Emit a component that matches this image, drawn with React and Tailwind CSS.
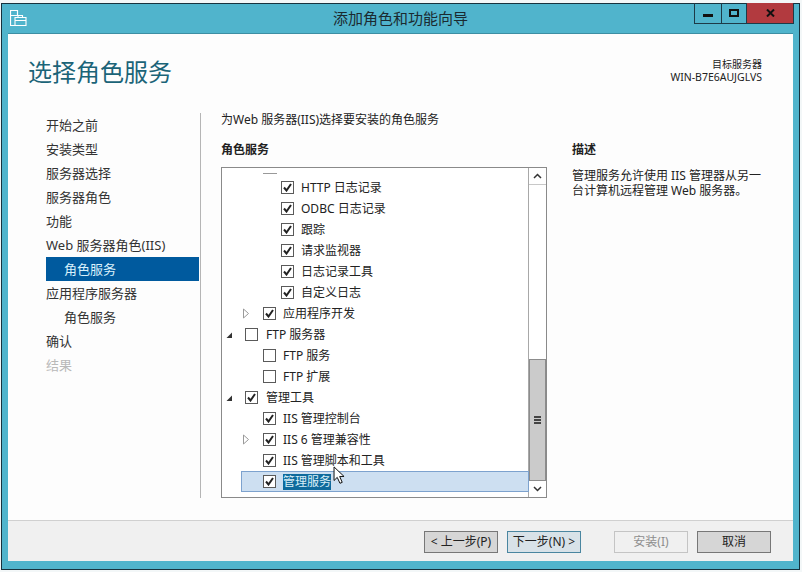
const font = { fontFamily: '"Noto Sans","Noto Sans CJK SC",sans-serif' };

const steps = [
  { t: "开始之前" },
  { t: "安装类型" },
  { t: "服务器选择" },
  { t: "服务器角色" },
  { t: "功能" },
  { t: "Web 服务器角色(IIS)" },
  { t: "角色服务", sub: true, active: true },
  { t: "应用程序服务器" },
  { t: "角色服务", sub: true },
  { t: "确认" },
  { t: "结果", off: true },
];

const rows = [
  { t: "HTTP 日志记录", l: 2, c: true },
  { t: "ODBC 日志记录", l: 2, c: true },
  { t: "跟踪", l: 2, c: true },
  { t: "请求监视器", l: 2, c: true },
  { t: "日志记录工具", l: 2, c: true },
  { t: "自定义日志", l: 2, c: true },
  { t: "应用程序开发", l: 1, c: true, a: "closed" },
  { t: "FTP 服务器", l: 0, c: false, a: "open" },
  { t: "FTP 服务", l: 1, c: false },
  { t: "FTP 扩展", l: 1, c: false },
  { t: "管理工具", l: 0, c: true, a: "open" },
  { t: "IIS 管理控制台", l: 1, c: true },
  { t: "IIS 6 管理兼容性", l: 1, c: true, a: "closed" },
  { t: "IIS 管理脚本和工具", l: 1, c: true },
  { t: "管理服务", l: 1, c: true, sel: true },
];

function Check({ on }) {
  return (
    <span className="w-[13px] h-[13px] shrink-0 border border-[#5a5a5a] bg-white flex items-center justify-center">
      {on && (
        <svg width="9" height="9" viewBox="0 0 9 9">
          <path d="M1 4.5 L3.5 7.5 L8 1" fill="none" stroke="#222" strokeWidth="2" />
        </svg>
      )}
    </span>
  );
}

function Arrow({ kind }) {
  if (kind === "open")
    return (
      <svg width="8" height="8" viewBox="0 0 8 8">
        <path d="M7 1.5 V7 H1.5 Z" fill="#333" />
      </svg>
    );
  if (kind === "closed")
    return (
      <svg width="8" height="11" viewBox="0 0 8 11">
        <path d="M1.5 1 L6.5 5.5 L1.5 10 Z" fill="#fff" stroke="#9a9a9a" />
      </svg>
    );
  return null;
}

function Row({ r }) {
  if (r.sel) {
    return (
      <div className="h-[21px] ml-[19px] w-[288px] pl-[21px] flex items-center bg-[#cddff1] border border-[#7da2ce]">
        <Check on={r.c} />
        <span className="ml-[7px] text-[12px] leading-[16px] whitespace-nowrap bg-[#0f6a9c] text-[#d8eef8]">{r.t}</span>
      </div>
    );
  }
  const pad = r.l === 2 ? "pl-[38px]" : r.l === 1 ? "pl-[20px]" : "pl-[3px]";
  const slot = r.l === 0 ? "w-[20px]" : "w-[21px]";
  const tx = r.l === 0 ? "ml-[8px]" : "ml-[7px]";
  return (
    <div className={"h-[21px] flex items-center " + pad}>
      <span className={slot + " shrink-0 flex items-center"}>
        <Arrow kind={r.a} />
      </span>
      <Check on={r.c} />
      <span className={tx + " text-[12px] leading-[16px] whitespace-nowrap text-[#222]"}>{r.t}</span>
    </div>
  );
}

function Btn({ children, cls }) {
  return (
    <button className={"w-[74px] h-[22px] border text-[12px] leading-[20px] flex items-center justify-center " + cls}>
      {children}
    </button>
  );
}

export default function App() {
  return (
    <div style={font} className="w-[802px] h-[572px] bg-[#f3f7f8] pt-[3px] pl-[1px] overflow-hidden">
      <div className="w-[799px] h-[567px] border border-[#17323e] bg-[#50b4cc] flex flex-col">
        {/* title bar */}
        <div className="h-[29px] shrink-0 flex items-start relative">
          <svg className="absolute left-[8px] top-[6px]" width="17" height="17" viewBox="0 0 17 17">
            <path d="M0.5 0.5 H7.5 V5.5 H0.5 Z M0.5 5.5 V15.5 H16" fill="none" stroke="#fff" strokeWidth="1.2" />
            <path d="M5 7.5 H16 V15.5 H5 Z M5 10.5 H16 M8 7.5 V5.5 H12.5 V7.5" fill="none" stroke="#fff" strokeWidth="1.1" />
          </svg>
          <div className="flex-1 text-center text-[15px] leading-[29px] text-[#1b2a30]">添加角色和功能向导</div>
          <div className="absolute right-[5px] -top-px flex h-[21px] border-b border-l border-r border-[#1d3a47]">
            <div className="w-[27px] border-r border-[#1d3a47] flex items-center justify-center">
              <span className="w-[10px] h-[3px] mt-[5px] bg-[#111]" />
            </div>
            <div className="w-[25px] border-r border-[#1d3a47] flex items-center justify-center">
              <span className="w-[10px] h-[8px] border-2 border-[#111]" />
            </div>
            <div className="w-[46px] bg-[#b23a3f] flex items-center justify-center">
              <svg width="9" height="8" viewBox="0 0 9 8">
                <path d="M1 0.5 L8 7.5 M8 0.5 L1 7.5" stroke="#111" strokeWidth="2" />
              </svg>
            </div>
          </div>
        </div>
        {/* body */}
        <div className="mx-[6px] h-[528px] flex flex-col border-t border-[#3d8ea3] bg-[#fdfdfd]">
          <div className="h-[79px] shrink-0 flex justify-between">
            <div className="ml-[20px] mt-[20px] text-[24px] leading-[36px] text-[#1b6478]">选择角色服务</div>
            <div className="mr-[31px] mt-[24px] text-right text-[10.5px] leading-[13px] text-[#222]">
              <div className="text-[10px]">目标服务器</div>
              <div>WIN-B7E6AUJGLVS</div>
            </div>
          </div>
          <div className="h-[385px] shrink-0 flex">
            <div className="w-[193px] shrink-0 border-r border-[#b5b5b5] pl-[38px]">
              <div className="w-[153px]">
                {steps.map((s, i) => (
                  <div
                    key={i}
                    className={
                      "h-[24px] text-[13px] leading-[24px] whitespace-nowrap " +
                      (s.sub ? "pl-[18px] " : "") +
                      (s.active ? "bg-[#005a9e] text-[#d9f1fb] " : s.off ? "text-[#b9b9b9] " : "text-[#333] ")
                    }
                  >
                    {s.t}
                  </div>
                ))}
              </div>
            </div>
            <div className="w-[346px] pl-[20px] shrink-0 flex flex-col">
              <div className="h-[14px] text-[12px] leading-[14px] text-[#222] whitespace-nowrap">为Web 服务器(IIS)选择要安装的角色服务</div>
              <div className="mt-[16px] h-[14px] text-[12px] leading-[14px] font-bold text-[#222]">角色服务</div>
              <div className="mt-[10px] h-[332px] border border-[#8a8a8a] bg-white flex">
                <div className="flex-1 min-w-0 relative">
                  <div className="h-[9px] pl-[41px] pt-[5px]">
                    <div className="w-[14px] h-px bg-[#999]" />
                  </div>
                  {rows.map((r, i) => (
                    <Row key={i} r={r} />
                  ))}
                  <svg className="absolute left-[111px] top-[298px]" width="13" height="20" viewBox="0 0 14 22">
                    <path d="M1 1 V16 L4.5 12.5 L7.5 19 L10 18 L7.2 11.5 H12 Z" fill="#fff" stroke="#111" strokeWidth="1.1" />
                  </svg>
                </div>
                <div className="w-[18px] shrink-0 border-l border-[#a8a8a8] flex flex-col bg-white">
                  <div className="h-[17px] border-b border-[#c8c8c8] flex items-center justify-center">
                    <svg width="9" height="6" viewBox="0 0 9 6"><path d="M1 5 L4.5 1.5 L8 5" fill="none" stroke="#333" strokeWidth="1.5" /></svg>
                  </div>
                  <div className="h-[174px]" />
                  <div className="h-[122px] bg-[#cbcbcb] border border-[#8c8c8c] flex flex-col items-center justify-center gap-[1px]">
                    <span className="w-[7px] h-[2px] bg-[#444]" />
                    <span className="w-[7px] h-[2px] bg-[#444]" />
                    <span className="w-[7px] h-[2px] bg-[#444]" />
                  </div>
                  <div className="flex-1 flex items-center justify-center">
                    <svg width="9" height="6" viewBox="0 0 9 6"><path d="M1 1 L4.5 4.5 L8 1" fill="none" stroke="#333" strokeWidth="1.5" /></svg>
                  </div>
                </div>
              </div>
            </div>
            <div className="ml-[25px] w-[200px]">
              <div className="mt-[30px] h-[14px] text-[12px] leading-[14px] font-bold text-[#222]">描述</div>
              <div className="mt-[11px] text-[12px] leading-[15px] text-[#222] w-[195px]">
                管理服务允许使用 IIS 管理器从另一台计算机远程管理 Web 服务器。
              </div>
            </div>
          </div>
          <div className="flex-1 mt-[22px] border-t border-[#d0d0d0] bg-[#f0f0f0] flex items-start pt-[10px]">
            <div className="ml-[416px] flex">
              <Btn cls="bg-[#d6d6d6] border-[#777] text-[#222]">&lt; 上一步(P)</Btn>
              <Btn cls="ml-[9px] bg-[#d8e2e8] border-[#4a86a0] text-[#222]">下一步(N) &gt;</Btn>
              <Btn cls="ml-[33px] bg-[#f0f0f0] border-[#c4c4c4] text-[#8e8e8e]">安装(I)</Btn>
              <Btn cls="ml-[9px] bg-[#d6d6d6] border-[#777] text-[#222]">取消</Btn>
            </div>
          </div>
        </div>
      </div>
    </div>
  );
}
